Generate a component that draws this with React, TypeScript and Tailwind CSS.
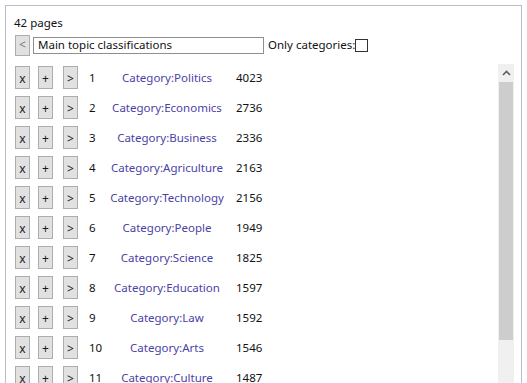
import React from 'react'

const rows = [
  { n: 1, name: 'Category:Politics', count: 4023 },
  { n: 2, name: 'Category:Economics', count: 2736 },
  { n: 3, name: 'Category:Business', count: 2336 },
  { n: 4, name: 'Category:Agriculture', count: 2163 },
  { n: 5, name: 'Category:Technology', count: 2156 },
  { n: 6, name: 'Category:People', count: 1949 },
  { n: 7, name: 'Category:Science', count: 1825 },
  { n: 8, name: 'Category:Education', count: 1597 },
  { n: 9, name: 'Category:Law', count: 1592 },
  { n: 10, name: 'Category:Arts', count: 1546 },
  { n: 11, name: 'Category:Culture', count: 1487 },
]

function SmallButton({ label }: { label: string }) {
  return (
    <button className="w-[15px] h-[23px] bg-[#e1e1e1] border border-[#adadad] text-[12px] leading-none text-[#1a1a1a] flex items-center justify-center pt-[2px]">
      {label}
    </button>
  )
}

export default function App() {
  return (
    <div
      className="w-[527px] h-[383px] overflow-hidden bg-white pl-[5px] pt-[5px] text-[11.5px] text-[#111]"
      style={{ fontFamily: '"Noto Sans", "Open Sans", sans-serif' }}
    >
      <div className="w-[517px] h-[400px] border border-[#bdb9c9] bg-white">
        <div className="pl-[8px] pt-[9px] leading-[16px]">42 pages</div>

        <div className="flex items-center pl-[9px] mt-[4px] h-[20px]">
          <button className="w-[15px] h-[21px] bg-[#e1e1e1] border border-[#adadad] text-[#777] text-[12px] leading-none flex items-center justify-center">
            &lt;
          </button>
          <div className="ml-[3px] w-[231px] h-[17px] border border-[#8f8f8f] flex items-center pl-[4px] leading-none">
            Main topic classifications
          </div>
          <span className="ml-[4px]">Only categories:</span>
          <span className="w-[13px] h-[13px] border border-[#333] bg-white" />
        </div>

        <div className="flex mt-[9px]">
          <div className="flex-1 pl-[9px] pt-[2px]">
            {rows.map((r) => (
              <div key={r.n} className="flex items-start h-[30px]">
                <SmallButton label="x" />
                <div className="ml-[8px]">
                  <SmallButton label="+" />
                </div>
                <div className="ml-[10px]">
                  <SmallButton label=">" />
                </div>
                <div className="ml-[11px] w-[12px] pt-[4px] leading-[16px]">{r.n}</div>
                <div className="w-[132px] text-center pt-[4px] leading-[16px] text-[#4a42a6]">
                  {r.name}
                </div>
                <div className="ml-[3px] pt-[4px] leading-[16px]">{r.count}</div>
              </div>
            ))}
          </div>
          <div className="w-[16px] mr-[7px] bg-[#f0f0f0] flex flex-col">
            <div className="h-[18px] flex items-center justify-center">
              <svg width="9" height="6" viewBox="0 0 9 6">
                <path d="M1 5 L4.5 1.5 L8 5" stroke="#606060" strokeWidth="1.6" fill="none" />
              </svg>
            </div>
            <div className="h-[258px] mx-[1px] bg-[#cdcdcd]" />
            <div className="flex-1" />
          </div>
        </div>
      </div>
    </div>
  )
}
